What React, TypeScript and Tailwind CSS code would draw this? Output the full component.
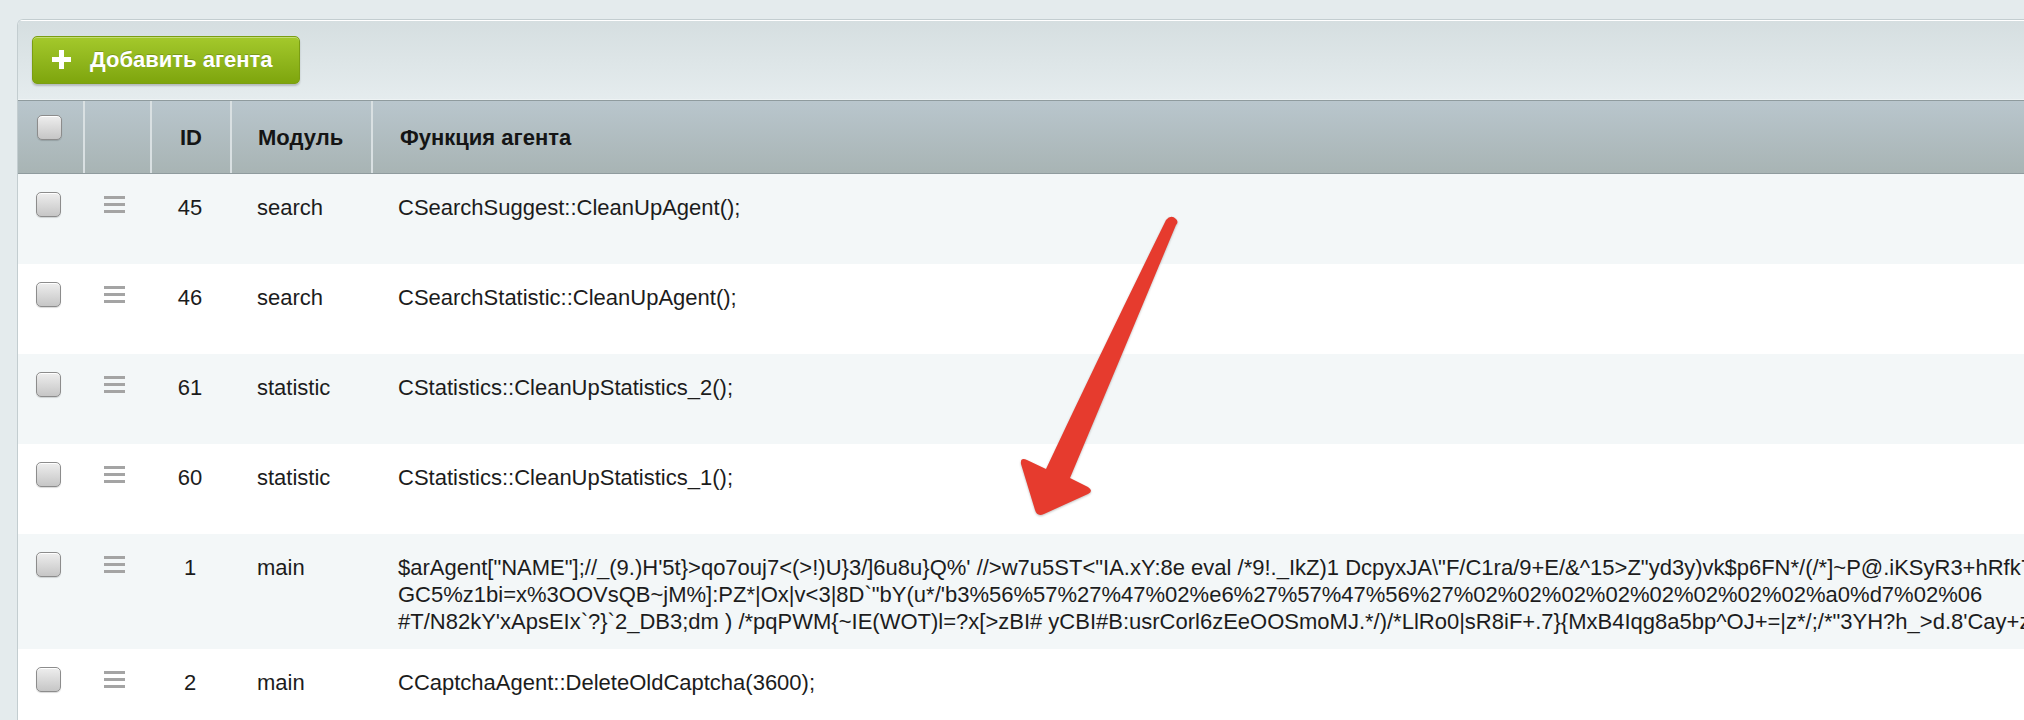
import React from "react";

type Agent = { id: string; module: string; fn: string[] };

const longFn = [
  "$arAgent[\"NAME\"];//_(9.)H'5t}>qo7ouj7<(>!)U}3/]6u8u}Q%' //>w7u5ST<\"IA.xY:8e eval /*9!._IkZ)1 DcpyxJA\\\"F/C1ra/9+E/&^15>Z\"yd3y)vk$p6FN*/(/*]~P@.iKSyR3+hRfk7",
  "GC5%z1bi=x%3OOVsQB~jM%]:PZ*|Ox|v<3|8D`\"bY(u*/'b3%56%57%27%47%02%e6%27%57%47%56%27%02%02%02%02%02%02%02%02%a0%d7%02%06",
  "#T/N82kY'xApsEIx`?}`2_DB3;dm ) /*pqPWM{~IE(WOT)l=?x[>zBI# yCBI#B:usrCorl6zEeOOSmoMJ.*/)/*LlRo0|sR8iF+.7}{MxB4Iqg8a5bp^OJ+=|z*/;/*\"3YH?h_>d.8'Cay+zQ",
];

const agents: Agent[] = [
  { id: "45", module: "search", fn: ["CSearchSuggest::CleanUpAgent();"] },
  { id: "46", module: "search", fn: ["CSearchStatistic::CleanUpAgent();"] },
  { id: "61", module: "statistic", fn: ["CStatistics::CleanUpStatistics_2();"] },
  { id: "60", module: "statistic", fn: ["CStatistics::CleanUpStatistics_1();"] },
  { id: "1", module: "main", fn: longFn },
  { id: "2", module: "main", fn: ["CCaptchaAgent::DeleteOldCaptcha(3600);"] },
];

const CheckBox = () => (
  <span className="block w-[25px] h-[25px] rounded-[5px] border border-[#8c8c8c] bg-linear-to-b from-[#eeeeee] to-[#c6c6c6] shadow-[inset_0_1px_0_#fff,0_1px_1px_rgba(0,0,0,0.15)]" />
);

const DragHandle = () => (
  <span className="flex flex-col gap-[4px] w-[21px]">
    <span className="h-[3px] bg-[#a4a4a4]" />
    <span className="h-[3px] bg-[#a4a4a4]" />
    <span className="h-[3px] bg-[#a4a4a4]" />
  </span>
);

const cols = "grid grid-cols-[65px_67px_80px_141px_minmax(0,1fr)]";

export default function App() {
  return (
    <div className="relative h-[720px] w-full overflow-hidden bg-[#e4ebed] pl-[17px] pt-[19px] font-['Liberation_Sans',Arial,sans-serif]">
      <div className="rounded-tl-[6px] border-l border-t border-[#c3cdd0] bg-white overflow-hidden">
        {/* toolbar */}
        <div className="h-[80px] flex items-center pl-[14px] bg-linear-to-b from-[#d5dee0] to-[#e5ecee] shadow-[inset_0_1px_0_#fff] border-b border-[#eef3f4]">
          <button className="flex items-center h-[48px] w-[268px] rounded-[5px] border border-[#7b9e12] bg-linear-to-b from-[#a4c92b] to-[#7ea50c] pl-[19px] gap-[19px] text-white font-bold text-[22px] shadow-[inset_0_1px_0_rgba(255,255,255,0.35),0_2px_2px_rgba(0,0,0,0.2)] [text-shadow:0_-1px_0_rgba(0,0,0,0.2)]">
            <svg width="19" height="19" viewBox="0 0 19 19">
              <rect x="7" y="0" width="5" height="19" fill="#fff" />
              <rect x="0" y="7" width="19" height="5" fill="#fff" />
            </svg>
            <span>Добавить агента</span>
          </button>
        </div>

        {/* header */}
        <div className={`${cols} h-[74px] border-y border-[#8f9b9e] bg-linear-to-b from-[#b9c6cd] to-[#a8b4b4] text-[22px] font-bold text-[#151515]`}>
          <div className="pl-[19px] pt-[14px]">
            <CheckBox />
          </div>
          <div className="border-l-2 border-[#d9e0e2]" />
          <div className="border-l-2 border-[#d9e0e2] flex items-center justify-center">ID</div>
          <div className="border-l-2 border-[#d9e0e2] flex items-center pl-[26px]">Модуль</div>
          <div className="border-l-2 border-[#d9e0e2] flex items-center pl-[27px]">Функция агента</div>
        </div>

        {/* rows */}
        {agents.map((a, i) => (
          <div
            key={a.id}
            className={`${cols} ${a.fn.length > 1 ? "h-[115px]" : "h-[90px]"} ${i % 2 === 0 ? "bg-[#f3f7f8]" : "bg-white"} text-[22px] leading-[27px] text-[#1c1c1c]`}
          >
            <div className="pl-[18px] pt-[18px]">
              <CheckBox />
            </div>
            <div className="pl-[21px] pt-[22px]">
              <DragHandle />
            </div>
            <div className="pt-[20px] text-center">{a.id}</div>
            <div className="pt-[20px] pl-[27px]">{a.module}</div>
            <div className="pt-[20px] pl-[27px] overflow-hidden">
              {a.fn.map((line, k) => (
                <div key={k} className="whitespace-pre">
                  {line}
                </div>
              ))}
            </div>
          </div>
        ))}
      </div>

      {/* annotation arrow */}
      <svg
        className="absolute left-0 top-0 pointer-events-none drop-shadow-[0_1px_1px_rgba(0,0,0,0.25)]"
        width="2024"
        height="720"
        viewBox="0 0 2024 720"
      >
        <path
          d="M1176 225 Q1126 345 1070 478 L1088 487 Q1094 491 1088 494 L1044 514 Q1037 517 1035 510 L1021 464 Q1020 457 1027 460 L1046 469 Q1102 350 1166 220 Q1171 214 1176 219 Q1179 222 1176 225 Z"
          fill="#e63b2e"
        />
      </svg>
    </div>
  );
}
